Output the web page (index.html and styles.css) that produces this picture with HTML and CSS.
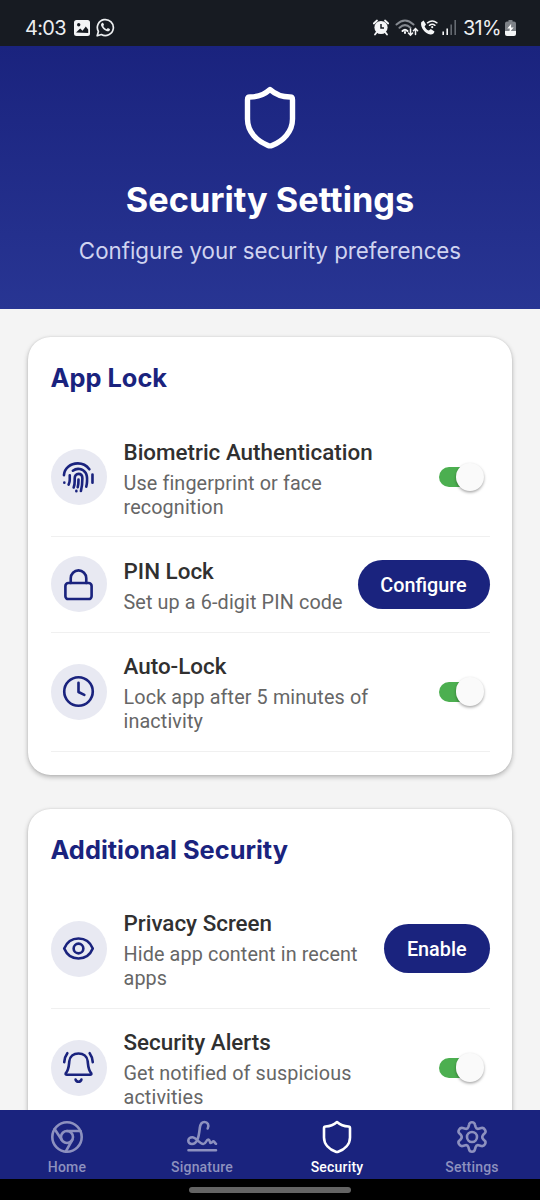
FILE: index.html
```html
<!DOCTYPE html>
<html lang="en">
<head>
<meta charset="utf-8">
<title>Security Settings</title>
<link rel="stylesheet" href="styles.css">
</head>
<body>
<div class="phone">
  <div class="status">
    <span class="time">4:03</span>
    <svg class="st-img" width="16" height="16" viewBox="0 0 16 16"><rect width="16" height="16" rx="2.5" fill="#f4f5f7"/><circle cx="4.7" cy="4.8" r="1.7" fill="#171b22"/><path d="M2 12.5l4.2-4 2.3 2.2 3.3-4.2 2.4 3v3.5z" fill="#171b22"/></svg>
    <svg class="st-wa" width="19" height="19" viewBox="0 0 19 19" fill="none" stroke="#eceef0" stroke-width="1.7"><path d="M1.2 17.8l1.2-4.3a8 8 0 1 1 3 3z" stroke-linejoin="round"/><path d="M5.7 5.2c.7-.7 1.3-.6 1.6 0l.7 1.6-.7 1.2c.8 1.7 1.9 2.6 3.4 3.2l1.1-1.1 2 1c.4.3.1 1.4-.7 1.9-1 .7-2.6.3-4.5-1C6.700 10.600 5.600 8.900 5 7.200c-.1-.8.100-1.500.7-2z" fill="#eceef0" stroke="none"/></svg>
    <span class="spacer"></span>
    <svg class="st-alarm" width="16" height="17" viewBox="0 0 16 17"><circle cx="8" cy="8.500" r="6.600" fill="#f4f5f7"/><path d="M.8 4.500L4 1.500M15.200 4.500L12 1.500M3.500 13.500L2 15.500M12.500 13.500L14 15.500" stroke="#f4f5f7" stroke-width="1.800" stroke-linecap="round"/><path d="M8 5v4h3" fill="none" stroke="#171b22" stroke-width="1.500"/></svg>
    <svg class="st-wifi" width="24" height="18" viewBox="0 0 24 18" fill="none" stroke-linecap="round" stroke-width="2"><path d="M1.500 5.500Q10-2.500 18.500 5.500M4.500 8.800Q10 3.500 15.500 8.800" stroke="#858990"/><path d="M7.500 12Q10 9.500 12.500 12" stroke="#f4f5f7"/><path d="M10 13v1" stroke="#f4f5f7"/><path d="M15.500 10v6M13.400 14l2.100 2.200 2.100-2.200M20.500 15.500V9.700M18.400 11.700l2.100-2.200 2.100 2.200" stroke="#f4f5f7" stroke-width="1.500"/></svg>
    <svg class="st-call" width="18" height="17" viewBox="0 0 18 17"><path d="M1.200 3.200L3.600 1.500 6 5.400 4.600 7.400c.9 2 2.200 3.300 4.200 4.100l2-1.500 3.700 2.500c-.5 2-2 3.200-4.200 2.900C5.200 14.600 0 8.600 1.200 3.200z" fill="#f4f5f7"/><path d="M7.500 3.800q4.700-3.800 9.400 0M9.500 6.300q2.700-2.200 5.400 0" fill="none" stroke="#f4f5f7" stroke-width="1.500" stroke-linecap="round"/><circle cx="12.200" cy="8.200" r="1.100" fill="#f4f5f7"/></svg>
    <svg class="st-sig" width="15" height="15" viewBox="0 0 15 15"><path d="M1.200 11.500V15M5.200 8.500V15" stroke="#f4f5f7" stroke-width="1.600"/><path d="M9.200 4.500V15M13.200 0V15" stroke="#646970" stroke-width="1.600"/></svg>
    <span class="pct">31%</span>
    <svg class="st-bat" width="11" height="16" viewBox="0 0 11 16"><path d="M3.500 0h4v1.500H9A2 2 0 0 1 11 3.500V11H0V3.500a2 2 0 0 1 2-2h1.500z" fill="#7e8288"/><path d="M0 11h11v3a2 2 0 0 1-2 2H2a2 2 0 0 1-2-2z" fill="#f4f5f7"/><path d="M6.200 3.700L2.300 8.500h2.500l-.4 4 4.300-5H6z" fill="#fff"/></svg>
  </div>

  <header class="hero">
    <svg class="hero-icon" width="54" height="66" viewBox="0 0 54 66"><path class="hero-shield" d="M27 4.500C21.500 9.500 14 12 7 12q-2.500 0-2.500 2.700V34C4.500 47 14 56 25 60.500q2 .8 4 0C40 56 49.500 47 49.500 34V14.700q0-2.700-2.500-2.700C40 12 32.500 9.500 27 4.500z"/></svg>
    <h1>Security Settings</h1>
    <p>Configure your security preferences</p>
  </header>

  <main class="content">
    <section class="card">
      <h2>App Lock</h2>
      <div class="row tall">
        <div class="disc"><svg class="ico" viewBox="0 0 34 34"><path d="M2 14.500C2.500 7.500 8.500 2.500 16.300 2.500c5 0 9 2.200 11.900 6M31.400 14v8.300M2.400 22.300v.1M8 14.800v4.500q0 2.500-1.200 5M11.200 10C15.500 6.800 21.500 8 24.300 12.200 26 14.800 26 18 25.800 21q-.1 3-.8 5.500M12 27.300c1.500-3.500 1-6 1.100-9.500 0-2.700 1.500-4.500 3.900-4.500s4 1.900 4 4.600c0 4.800-.2 8.500-1.500 13M17 19c0 2.500 0 5.500-.8 8M14.800 30.800v.4"/></svg></div>
        <div class="text"><h3>Biometric Authentication</h3><p>Use fingerprint or face<br>recognition</p></div>
        <div class="toggle"></div>
      </div>
      <div class="row">
        <div class="disc"><svg class="ico" viewBox="0 0 34 34"><rect x="3.500" y="15.500" width="27" height="16.500" rx="3"/><path d="M9 15.500V10.500a8 8 0 0 1 16 0v5"/></svg></div>
        <div class="text"><h3>PIN Lock</h3><p>Set up a 6-digit PIN code</p></div>
        <button class="btn configure">Configure</button>
      </div>
      <div class="row tall">
        <div class="disc"><svg class="ico" viewBox="0 0 34 34"><circle cx="17" cy="17" r="14.700"/><path d="M17 8v9.500l6 3"/></svg></div>
        <div class="text"><h3>Auto-Lock</h3><p>Lock app after 5 minutes of<br>inactivity</p></div>
        <div class="toggle"></div>
      </div>
    </section>

    <section class="card">
      <h2>Additional Security</h2>
      <div class="row tall">
        <div class="disc"><svg class="ico" viewBox="0 0 34 34"><path d="M2.300 17C5 10.500 10.500 6.700 17 6.700S29 10.500 31.700 17C29 23.500 23.500 27.300 17 27.300S5 23.500 2.300 17z"/><circle cx="17" cy="17" r="5"/></svg></div>
        <div class="text"><h3>Privacy Screen</h3><p>Hide app content in recent<br>apps</p></div>
        <button class="btn enable">Enable</button>
      </div>
      <div class="row tall">
        <div class="disc"><svg class="ico" viewBox="0 0 34 34"><path d="M5 24.500q-1.500 0-1.200-1.400C7 19.500 7 16 7.500 10.800 8 5.500 12 2.600 17 2.600s9 2.900 9.500 8.200c.5 5.200.5 8.700 3.700 12.300q.3 1.400-1.200 1.400zM14 29.500c.4 1.500 1.500 2.200 3 2.200s2.600-.7 3-2.200M5.500 2.300C3.500 5 2.500 7.500 2.300 11.500M28.500 2.300c2 2.700 3 5.200 3.200 9.200"/></svg></div>
        <div class="text"><h3>Security Alerts</h3><p>Get notified of suspicious<br>activities</p></div>
        <div class="toggle"></div>
      </div>
    </section>
  </main>

  <nav class="tabs">
    <div class="tab"><svg class="tab-ico" viewBox="0 0 34 34"><circle cx="17" cy="17" r="14.700"/><circle cx="17" cy="17" r="6"/><path d="M17 11h13.500M11.800 20L4.600 9M22.200 20l-6.500 11.600"/></svg><span>Home</span></div>
    <div class="tab"><svg class="tab-ico" viewBox="0 0 34 34"><path d="M3.500 30.300h27.500M22.700 8.500C24.500 5 22.500 2 19.500 2c-3.300 0-4.300 2.500-4.700 6-.6 5-1 8.500-2.300 11.500-1.300 3-3.400 4.500-5.500 4.500-2.300 0-3.700-1.500-3.700-3.300 0-2 1.800-3.400 4-3.400 4 0 7 6.700 11 6.700 3 0 2.700-4.500 5-4.500 2 0 .8 3.500 2.500 3.500 1.500 0 1.500-1.800 2.800-1.800 1 0 .8 1.900 2.400 2.500"/></svg><span>Signature</span></div>
    <div class="tab active"><svg class="tab-ico" viewBox="0 0 34 34"><path d="M17 2C13.800 4.800 9.500 6.300 5.500 6.500q-1.500.1-1.500 1.700V17.500C4 24.500 9.500 29.500 15.800 31.800q1.200.5 2.400 0C24.500 29.500 30 24.500 30 17.500V8.200q0-1.600-1.500-1.700C24.500 6.300 20.200 4.800 17 2z"/></svg><span>Security</span></div>
    <div class="tab"><svg class="tab-ico" viewBox="0 0 34 34"><path d="M14 4.800Q14.500 2.300 17 2.300T20 4.800L20.700 7.200Q21.400 9.300 23.600 8.800L26.300 8Q28.500 7.500 29.900 9.700T29.800 13.200L28 15Q26.500 17 28 19L29.800 20.800Q31.200 22.100 29.900 24.300T26.300 26L23.600 25.200Q21.400 24.700 20.700 26.800L20 29.200Q19.500 31.700 17 31.700T14 29.200L13.300 26.800Q12.600 24.700 10.400 25.200L7.700 26Q5.500 26.500 4.100 24.300T4.200 20.800L6 19Q7.500 17 6 15L4.200 13.200Q2.800 11.900 4.100 9.700T7.700 8L10.400 8.800Q12.600 9.300 13.300 7.200z"/><circle cx="17" cy="17" r="5"/></svg><span>Settings</span></div>
  </nav>
  <div class="gesture"><i></i></div>
</div>
</body>
</html>
```
FILE: styles.css
```css
* { box-sizing: border-box; }
body, h1, h2, h3, p { margin: 0; }
body { font-family: Roboto, sans-serif; }
.phone { width: 540px; height: 1200px; display: flex; flex-direction: column; overflow: hidden; background: #f4f4f4; }

.status { flex: none; height: 46px; background: #171b22; display: flex; align-items: center; padding: 9px 24px 0 25px; color: #eceef0; font-family: Inter, sans-serif; font-size: 20px; }
.spacer { flex: 1; }
.time { width: 49px; letter-spacing: -.7px; }
.st-wa { margin-left: 6px; }
.st-alarm { margin-right: 6px; }
.st-wifi { margin-right: 1px; }
.st-call { margin-right: 4px; }
.st-sig { margin-right: 6px; }
.pct { width: 42px; letter-spacing: -.8px; }

.hero { flex: none; height: 263px; background: linear-gradient(#1a237e, #283593); display: flex; flex-direction: column; align-items: center; padding-top: 39px; color: #fff; font-family: Inter, sans-serif; }
.hero-icon { display: block; }
.hero-shield { fill: none; stroke: #fff; stroke-width: 5.4; stroke-linejoin: round; }
.hero h1 { font-size: 34.300px; line-height: 42px; font-weight: 700; margin-top: 28px; }
.hero p { font-size: 22.300px; line-height: 28px; margin-top: 16px; color: #d0d4f0; }

.content { flex: 1; min-height: 0; overflow: hidden; padding: 28px 28px 0; }
.card { height: 437.500px; margin-bottom: 34px; padding: 23px 22.500px; border-radius: 22.500px; background: #fff; box-shadow: 0 2px 5px rgba(0, 0, 0, .27), 0 0 2px rgba(0, 0, 0, .1); }
.card h2 { height: 58px; font: 700 25.400px/36px Inter, sans-serif; color: #1a237e; }
.row { height: 95.500px; display: flex; align-items: center; border-bottom: 1.400px solid #f0f0f0; }
.row.tall { height: 119px; }
.disc { flex: none; width: 56px; height: 56px; border-radius: 50%; background: #e8e9f2; display: grid; place-items: center; }
.ico { width: 33px; height: 33px; fill: none; stroke: #1a237e; stroke-width: 2.700; stroke-linecap: round; stroke-linejoin: round; }
.text { flex: 1; margin-left: 17px; padding-top: 4px; white-space: nowrap; }
.text h3 { font-size: 22.400px; line-height: 26px; font-weight: 500; color: #303030; margin-bottom: 7px; }
.text p { font-size: 19.800px; line-height: 23.600px; letter-spacing: .12px; color: #666; }
.toggle { position: relative; flex: none; width: 40px; height: 20px; margin-right: 11px; border-radius: 10px; background: #4caf50; }
.toggle::after { content: ""; position: absolute; left: 17px; top: -4.500px; width: 28.500px; height: 28.500px; border-radius: 50%; background: #fafafa; box-shadow: 0 1.500px 3px rgba(0, 0, 0, .35); }
.btn { flex: none; height: 49.500px; padding: 2px 0 0; border: 0; border-radius: 25px; background: #1a237e; color: #fff; font: 500 19.800px Roboto, sans-serif; }
.configure { width: 132px; }
.enable { width: 105.500px; }

.tabs { flex: none; height: 69px; background: #1a237e; display: flex; }
.tab { flex: 1; display: flex; flex-direction: column; align-items: center; padding: 10px 1px 0 0; color: #8d91bf; font-size: 14px; font-weight: 500; letter-spacing: .2px; }
.tab.active { color: #fff; }
.tab span { line-height: 18px; margin-top: 4px; }
.tab-ico { width: 34px; height: 34px; fill: none; stroke: currentColor; stroke-width: 2.600; stroke-linejoin: round; stroke-linecap: round; }
.gesture { flex: none; height: 21px; background: #000; display: flex; justify-content: center; padding-top: 8px; }
.gesture i { width: 162px; height: 5.500px; border-radius: 3px; background: #646464; }
```
